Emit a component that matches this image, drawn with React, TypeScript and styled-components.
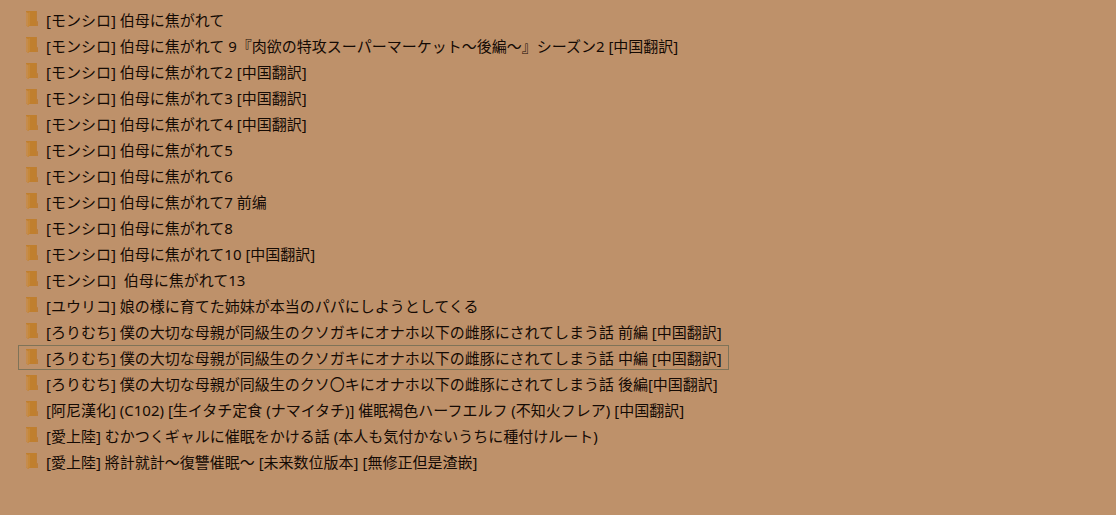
import React, { useState } from "react";
import styled, { createGlobalStyle } from "styled-components";

const GlobalStyle = createGlobalStyle`
  body {
    margin: 0;
    background: #be916a;
  }
`;

const FolderList = styled.ul`
  margin: 0;
  padding: 7px 18px 40px;
  list-style: none;
  display: flex;
  flex-direction: column;
  gap: 1px;
`;

const Row = styled.li`
  display: flex;
`;

const FolderButton = styled.button<{ $current: boolean }>`
  display: flex;
  align-items: center;
  gap: 8px;
  box-sizing: border-box;
  height: 25px;
  padding: 0 6px 0 7px;
  border: 1px solid ${(p) => (p.$current ? "#7f7358" : "transparent")};
  background: none;
  outline: none;
  color: #140a04;
  font-family: "Noto Sans", "Noto Sans CJK SC", sans-serif;
  font-size: 15px;
  line-height: 23px;
  white-space: pre;
  text-align: left;
`;

const Icon = styled.svg`
  flex: none;
  width: 12px;
  height: 16px;
  margin-bottom: 1px;
`;

const Name = styled.span`
  padding-top: 2px;
`;

const folders = [
  "[モンシロ] 伯母に焦がれて",
  "[モンシロ] 伯母に焦がれて 9『肉欲の特攻スーパーマーケット～後編～』シーズン2 [中国翻訳]",
  "[モンシロ] 伯母に焦がれて2 [中国翻訳]",
  "[モンシロ] 伯母に焦がれて3 [中国翻訳]",
  "[モンシロ] 伯母に焦がれて4 [中国翻訳]",
  "[モンシロ] 伯母に焦がれて5",
  "[モンシロ] 伯母に焦がれて6",
  "[モンシロ] 伯母に焦がれて7 前编",
  "[モンシロ] 伯母に焦がれて8",
  "[モンシロ] 伯母に焦がれて10 [中国翻訳]",
  "[モンシロ]  伯母に焦がれて13",
  "[ユウリコ] 娘の様に育てた姉妹が本当のパパにしようとしてくる",
  "[ろりむち] 僕の大切な母親が同級生のクソガキにオナホ以下の雌豚にされてしまう話 前編 [中国翻訳]",
  "[ろりむち] 僕の大切な母親が同級生のクソガキにオナホ以下の雌豚にされてしまう話 中編 [中国翻訳]",
  "[ろりむち] 僕の大切な母親が同級生のクソ〇キにオナホ以下の雌豚にされてしまう話 後編[中国翻訳]",
  "[阿尼漢化] (C102) [生イタチ定食 (ナマイタチ)] 催眠褐色ハーフエルフ (不知火フレア) [中国翻訳]",
  "[愛上陸] むかつくギャルに催眠をかける話 (本人も気付かないうちに種付けルート)",
  "[愛上陸] 將計就計～復讐催眠～ [未来数位版本] [無修正但是渣嵌]",
];

function FolderIcon() {
  return (
    <Icon viewBox="0 0 12 16" aria-hidden="true">
      <path d="M0 0H11V10L12 11V15H3L2 16L0 14Z" fill="#c07f2e" />
      <path d="M0 1L2 2V16L0 14Z" fill="#c68c4c" />
      <path d="M2 2L4 1V14L2 16Z" fill="#c68839" />
      <path d="M10 0H11V10L12 11V15H10Z" fill="#bd7e38" />
    </Icon>
  );
}

export default function App() {
  const [current, setCurrent] = useState(13);
  return (
    <>
      <GlobalStyle />
      <main>
        <FolderList>
          {folders.map((name, i) => (
            <Row key={name}>
              <FolderButton
                type="button"
                $current={i === current}
                aria-pressed={i === current}
                onClick={() => setCurrent(i)}
              >
                <FolderIcon />
                <Name>{name}</Name>
              </FolderButton>
            </Row>
          ))}
        </FolderList>
      </main>
    </>
  );
}
